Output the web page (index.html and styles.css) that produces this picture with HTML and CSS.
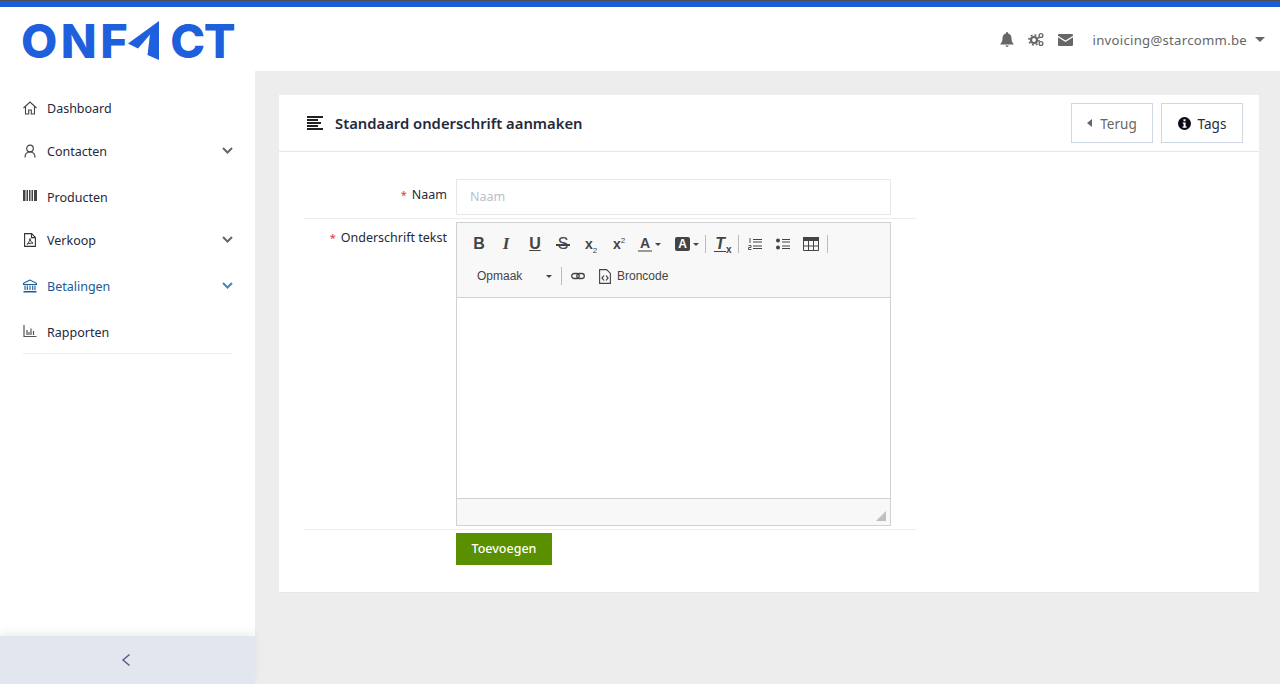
FILE: index.html
```html
<!DOCTYPE html>
<html lang="nl">
<head>
<meta charset="utf-8">
<title>Standaard onderschrift aanmaken</title>
<link rel="stylesheet" href="styles.css">
</head>
<body>
<div class="topline"></div>
<header class="header">
  <div class="logo">
    <span class="logo-text">ONF</span>
    <svg class="logo-arrow" width="32" height="39" viewBox="0 0 32 39"><path d="M31 0 L31 39 L19.500 34 L22 13.500 L10 27.500 L0 22.500 Z" fill="#1d5fdc"/></svg>
    <span class="logo-text ct">CT</span>
  </div>
  <div class="header-right">
    <svg class="hicon" width="14" height="15" viewBox="0 0 14 15"><path d="M7 0a1 1 0 0 1 1 1v.6c2.300.5 3.500 2.300 3.500 4.700 0 3 .8 4.300 2.200 5.700v.5H.3V12c1.400-1.400 2.200-2.700 2.200-5.700C2.500 3.900 3.700 2.100 6 1.600V1a1 1 0 0 1 1-1zM5.300 13.500h3.400A1.700 1.700 0 0 1 7 15a1.700 1.700 0 0 1-1.700-1.500z" fill="#666"/></svg>
    <svg class="hicon" width="16" height="15" viewBox="0 0 16 15"><g fill="none" stroke="#666"><circle cx="6" cy="8" r="3" stroke-width="2.200"/><circle cx="6" cy="8" r="5" stroke-width="1.600" stroke-dasharray="1.900 2"/><circle cx="13" cy="3.500" r="1.900" stroke-width="1.300"/><circle cx="13" cy="11.500" r="1.900" stroke-width="1.300"/></g></svg>
    <svg class="hicon" width="15" height="12" viewBox="0 0 15 12"><path d="M1 0h13a1 1 0 0 1 1 1v.7L7.500 6.500 0 1.700V1a1 1 0 0 1 1-1zM0 3.300l7.500 4.800L15 3.300V11a1 1 0 0 1-1 1H1a1 1 0 0 1-1-1z" fill="#666"/></svg>
    <span class="user">invoicing@starcomm.be</span>
    <span class="user-caret"></span>
  </div>
</header>
<div class="main">
  <aside class="sidebar">
    <nav class="menu">
      <a class="item leaf">
        <svg class="micon" width="14" height="14" viewBox="0 0 14 14"><path d="M.5 7 7 1l6.500 6M2.500 5.500v7.500h3.200V9h2.600v4h3.200V5.500" fill="none" stroke="#444" stroke-width="1.100"/></svg>
        <span>Dashboard</span>
      </a>
      <a class="item group">
        <svg class="micon" width="14" height="14" viewBox="0 0 14 14"><circle cx="7" cy="4.500" r="3.300" fill="none" stroke="#444" stroke-width="1.200"/><path d="M2 13.500c0-3.500 2-5.500 5-5.500s5 2 5 5.500" fill="none" stroke="#444" stroke-width="1.200"/></svg>
        <span>Contacten</span>
        <svg class="chev" width="11" height="7" viewBox="0 0 11 7"><path d="M1 1l4.500 4.500L10 1" fill="none" stroke="#666" stroke-width="2"/></svg>
      </a>
      <a class="item leaf">
        <svg class="micon" width="14" height="11" viewBox="0 0 14 11"><path d="M0 0h2.500v11H0zM3.500 0h1.500v11H3.500zM6 0h1.500v11H6zM8.500 0h1.500v11H8.500zM11 0h3v11h-3z" fill="#444"/></svg>
        <span>Producten</span>
      </a>
      <a class="item group">
        <svg class="micon" width="12" height="14" viewBox="0 0 12 14"><path d="M.6.600h7l3.800 3.800v9H.6zM7.500.600v4h4" fill="none" stroke="#333" stroke-width="1.100"/><path d="M6 5.500c-.4 2.500-1 4-3 5.700 2-.9 4-1.200 6-1-1.700-1-2.700-2.500-3-4.700z" fill="none" stroke="#333"/></svg>
        <span>Verkoop</span>
        <svg class="chev" width="11" height="7" viewBox="0 0 11 7"><path d="M1 1l4.500 4.500L10 1" fill="none" stroke="#666" stroke-width="2"/></svg>
      </a>
      <a class="item group active">
        <svg class="micon" width="14" height="14" viewBox="0 0 14 14"><path d="M7 1 .5 4.300v1.200h13V4.300zM2 6.500v4.500M4.300 6.500v4.500M7 6.500v4.500M9.700 6.500v4.500M12 6.500v4.500" fill="none" stroke="#1c5a96" stroke-width="1.100"/><path d="M.5 12h13v1.500H.5z" fill="#1c5a96"/></svg>
        <span>Betalingen</span>
        <svg class="chev" width="11" height="7" viewBox="0 0 11 7"><path d="M1 1l4.500 4.500L10 1" fill="none" stroke="#4a85b8" stroke-width="2"/></svg>
      </a>
      <a class="item leaf">
        <svg class="micon" width="13" height="12" viewBox="0 0 13 12"><path d="M.5 0v11.500H13M3.500 5v5M5.500 7v3M7.500 3.500V10M10 6v4" fill="none" stroke="#555" stroke-width="1.200"/></svg>
        <span>Rapporten</span>
      </a>
    </nav>
    <div class="collapse">
      <svg width="10" height="14" viewBox="0 0 10 14"><path d="M8.500 1.500 2 7l6.500 5.500" fill="none" stroke="#55597a" stroke-width="1.400"/></svg>
    </div>
  </aside>
  <main class="content">
    <section class="card">
      <div class="card-head">
        <svg class="title-icon" width="16" height="14" viewBox="0 0 16 14"><path d="M0 0h16v2H0zM0 3h11v2H0zM0 6h14v2H0zM0 9h11v2H0zM0 12h16v2H0z" fill="#222"/></svg>
        <h1 class="title">Standaard onderschrift aanmaken</h1>
        <div class="head-actions">
          <button class="btn-outline grey"><span class="back-caret"></span><span class="btn-text">Terug</span></button>
          <button class="btn-outline"><svg width="13" height="13" viewBox="0 0 13 13"><circle cx="6.500" cy="6.500" r="6.500" fill="#0a0a14"/><path d="M5.500 2.200h2v2h-2zM4.800 5.400h2.800v4h1v1.300H4.600V9.400h1V6.700h-.8z" fill="#fff"/></svg><span class="btn-text">Tags</span></button>
        </div>
      </div>
      <form class="form">
        <div class="row first">
          <label class="label"><span class="req">*</span>Naam</label>
          <div class="field"><input class="input" placeholder="Naam"></div>
        </div>
        <div class="row second">
          <label class="label"><span class="req">*</span>Onderschrift tekst</label>
          <div class="field">
            <div class="editor">
              <div class="toolbar">
                <div class="tb-row">
                  <span class="tb g-b">B</span>
                  <span class="tb g-i">I</span>
                  <span class="tb shifted"><span class="g-u">U</span></span>
                  <span class="tb"><span class="g-s">S</span></span>
                  <span class="tb g-x"><span>x<sub>2</sub></span></span>
                  <span class="tb g-x"><span>x<sup>2</sup></span></span>
                  <span class="tb wide"><span class="g-a">A</span><span class="mini-caret"></span></span>
                  <span class="tb wide box"><span class="g-abox">A</span><span class="mini-caret"></span></span>
                  <span class="sep first-sep"></span>
                  <span class="tb g-tx"><span><span class="tx-t">T</span><sub>x</sub></span></span>
                  <span class="sep narrow"></span>
                  <span class="tb"><svg width="14" height="12" viewBox="0 0 14 12"><path d="M5 1.500h9M5 4h9M5 8h9M5 10.500h9" stroke="#444" stroke-width="1.200" fill="none"/><path d="M2 0v5M.5 7.500h2.500v2h-2.500v2h3" stroke="#444" fill="none" stroke-width=".9"/></svg></span>
                  <span class="tb"><svg width="14" height="12" viewBox="0 0 14 12"><circle cx="2" cy="2.500" r="2" fill="#444"/><circle cx="2" cy="9.500" r="2" fill="#444"/><path d="M6 1.500h8M6 4h8M6 8h8M6 10.500h8" stroke="#444" stroke-width="1.200" fill="none"/></svg></span>
                  <span class="tb"><svg width="16" height="14" viewBox="0 0 16 14"><path d="M0 0h16v4H0z" fill="#444"/><path d="M.5.500h15v13H.5zM.5 9h15M5.500 4v9.500M10.500 4v9.500" fill="none" stroke="#444"/></svg></span>
                  <span class="sep tight"></span>
                </div>
                <div class="tb-row">
                  <span class="combo"><span>Opmaak</span><span class="mini-caret"></span></span>
                  <span class="sep link-sep"></span>
                  <span class="tb"><svg width="14" height="8" viewBox="0 0 14 8"><rect x=".7" y="1.500" width="7.500" height="5" rx="2.500" fill="none" stroke="#444" stroke-width="1.300"/><rect x="5.800" y="1.500" width="7.500" height="5" rx="2.500" fill="none" stroke="#444" stroke-width="1.300"/></svg></span>
                  <span class="source"><svg width="12" height="15" viewBox="0 0 12 15"><path d="M.6.600h7l3.800 3.800v10H.6z" fill="none" stroke="#444" stroke-width="1.100"/><path d="M5 6.500 3 9l2 2.500M7 6.500 9 9l-2 2.500" fill="none" stroke="#333" stroke-width="1.200"/></svg><span>Broncode</span></span>
                </div>
              </div>
              <div class="edit-area"></div>
              <div class="edit-foot"><svg class="grip" width="10" height="10" viewBox="0 0 10 10"><path d="M10 0v10H0z" fill="#bfbfbf"/></svg></div>
            </div>
          </div>
        </div>
        <div class="actions"><button type="button" class="btn-add">Toevoegen</button></div>
      </form>
    </section>
  </main>
</div>
</body>
</html>
```

FILE: styles.css
```css
* { box-sizing: border-box; }
html, body { margin: 0; height: 684px; overflow: hidden; }
body { font-family: "Noto Sans", "Open Sans", sans-serif; font-size: 12.500px; color: #1f2a3c; background: #ededed; display: flex; flex-direction: column; }
.topline { height: 7px; flex: none; background: #1a5bd7; border-top: 1px solid #4a4f5c; }

.header { height: 64px; flex: none; background: #fff; display: flex; align-items: flex-start; justify-content: space-between; }
.logo { display: flex; align-items: flex-start; margin: 14px 0 0 21px; color: #1d5fdc; }
.logo-text { font-family: Inter, "Liberation Sans", sans-serif; font-weight: 800; font-size: 47px; line-height: 40px; letter-spacing: 3.500px; }
.logo-arrow { margin: 0 0 0 -3px; flex: none; }
.logo-text.ct { margin-left: 10px; letter-spacing: -1.500px; }
.header-right { display: flex; align-items: center; height: 15px; margin: 25px 15px 0 0; }
.hicon { margin-right: 14px; flex: none; }
.user { margin-left: 6px; font-size: 13.200px; color: #666; letter-spacing: .25px; }
.user-caret { margin-left: 8px; border: 5px solid transparent; border-top-color: #666; border-bottom: 0; }

.main { flex: 1; display: flex; min-height: 0; }
.sidebar { width: 255px; flex: none; background: #fff; display: flex; flex-direction: column; }
.menu { margin: 15px 23px 0; border-bottom: 1px solid #ececec; display: flex; flex-direction: column; }
.item { display: flex; align-items: flex-start; padding-top: 14px; line-height: 18px; position: relative; color: #1f2a3c; }
.item.leaf { height: 43px; }
.item.group { height: 46px; }
.item.active { color: #1c5a96; }
.micon { flex: none; width: 14px; margin: 1px 10px 0 0; }
.chev { margin: 4px -1px 0 auto; flex: none; }
.collapse { margin-top: auto; height: 48px; background: #e2e6ef; box-shadow: 0 -4px 8px rgba(0,0,0,.06); display: flex; align-items: center; justify-content: center; padding-right: 3px; }

.content { flex: 1; padding: 24px 21px 0 24px; }
.card { height: 498px; background: #fff; border-bottom: 1px solid #e6e8ec; }
.card-head { height: 57px; border-bottom: 1px solid #e4e7ee; display: flex; align-items: center; padding: 0 16px 0 28px; }
.title-icon { flex: none; margin-right: 12px; }
.title { margin: 0; font-size: 14.800px; font-weight: 600; color: #1f2a3c; }
.head-actions { margin-left: auto; display: flex; gap: 8px; }
.btn-outline { width: 82px; height: 40px; background: #fff; border: 1px solid #cfd6e4; font: inherit; font-size: 13.500px; color: #1f2a3c; display: flex; align-items: center; justify-content: center; gap: 7px; padding: 0; }
.btn-outline.grey { color: #666; gap: 8px; }
.btn-text { padding-top: 1px; }
.back-caret { border: 4px solid transparent; border-right: 5px solid #666; border-left: 0; }

.form { width: 612px; margin-left: 25px; }
.row { display: flex; border-bottom: 1px solid #ececec; }
.row.first { padding-top: 27px; height: 67px; }
.row.second { padding-top: 3px; height: 311px; }
.label { width: 143px; margin-right: 9px; text-align: right; line-height: 18px; padding-top: 7px; flex: none; }
.req { color: #e3342f; margin-right: 5px; font-size: 11px; }
.field { width: 435px; }
.input { display: block; width: 100%; height: 36px; border: 1px solid #e4e7ee; padding: 0 13px 2px; font: inherit; outline: none; background: #fff; }
.input::placeholder { color: #b9c0cc; opacity: 1; }

.editor { border: 1px solid #d1d1d1; height: 304px; display: flex; flex-direction: column; }
.toolbar { height: 75px; flex: none; background: #f8f8f8; border-bottom: 1px solid #d1d1d1; padding: 7px 0 0 8px; display: flex; flex-direction: column; gap: 4px; }
.tb-row { display: flex; align-items: center; height: 28px; }
.tb { width: 28px; height: 28px; flex: none; display: flex; align-items: center; justify-content: center; color: #444; font-family: "Liberation Sans", sans-serif; font-size: 16px; font-weight: 700; }
.tb.shifted { margin-left: 1px; }
.tb.wide { width: 33px; gap: 3px; }
.tb.wide.box { width: 34px; justify-content: flex-end; padding-right: 1px; }
.tb sub, .tb sup { font-size: 8px; font-weight: 400; line-height: 0; }
.g-i { font-family: "Liberation Serif", serif; font-style: italic; font-size: 17px; margin-left: -1px; }
.g-u { text-decoration: underline; }
.g-s { position: relative; font-weight: 400; }
.g-s::after { content: ""; position: absolute; left: -2px; right: -2px; top: 9px; height: 1.500px; background: #444; }
.tb.g-x { font-size: 14px; }
.g-a { border-bottom: 2px solid #999; line-height: 14px; font-size: 14px; padding: 0 2px; }
.g-abox { background: #444; color: #fff; width: 15px; height: 14px; border-radius: 2px; font-size: 12px; line-height: 14px; text-align: center; }
.tb.g-tx { font-style: italic; font-size: 16px; }
.tx-t { border-bottom: 1px solid #444; display: inline-block; line-height: 15px; padding: 0 1px; }
.tb.g-tx sub { font-size: 10px; font-weight: 700; font-style: normal; }
.mini-caret { border: 3px solid transparent; border-top-color: #444; border-bottom: 0; flex: none; }
.sep { width: 1px; height: 18px; background: #bcbcbc; margin: 0 4px 0 3px; flex: none; }
.sep.first-sep { margin: 0 3px 0 5px; }
.sep.narrow { margin: 0 2px 0 1px; }
.sep.tight { margin: 0 0 0 2px; }
.sep.link-sep { margin-right: 2px; }
.combo { width: 93px; padding: 0 6px 0 12px; display: flex; justify-content: space-between; align-items: center; font-family: "Liberation Sans", sans-serif; font-size: 12px; color: #444; }
.source { display: flex; align-items: center; gap: 6px; font-family: "Liberation Sans", sans-serif; font-size: 12px; color: #444; margin-left: 7px; }
.edit-area { flex: 1; background: #fff; }
.edit-foot { height: 27px; flex: none; background: #f8f8f8; border-top: 1px solid #d1d1d1; display: flex; justify-content: flex-end; align-items: flex-end; padding: 0 4px 4px 0; }
.actions { padding: 3px 0 0 152px; }
.btn-add { width: 96px; height: 32px; background: #5a8f00; border: 0; color: #fff; font: inherit; font-weight: 500; padding: 0 0 2px; }
```
